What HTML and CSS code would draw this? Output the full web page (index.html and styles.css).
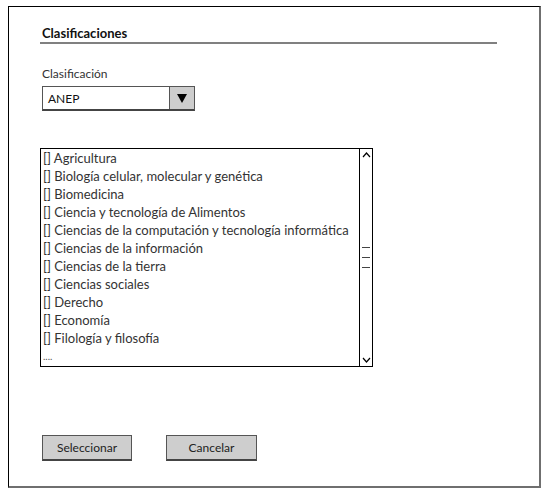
FILE: index.html
```html
<!DOCTYPE html>
<html lang="es">
<head>
<meta charset="utf-8">
<title>Clasificaciones</title>
<link rel="stylesheet" href="styles.css">
</head>
<body>
<div class="frame">
  <div class="title">Clasificaciones</div>
  <div class="label">Clasificación</div>
  <div class="select">
    <div class="select-value">ANEP</div>
    <div class="select-btn">
      <svg width="10" height="9" viewBox="0 0 10 9"><polygon points="0,0 10,0 5,9" fill="#000"/></svg>
    </div>
  </div>
  <div class="list">
    <div class="items">
      <div class="item">[] Agricultura</div>
      <div class="item">[] Biología celular, molecular y genética</div>
      <div class="item">[] Biomedicina</div>
      <div class="item">[] Ciencia y tecnología de Alimentos</div>
      <div class="item">[] Ciencias de la computación y tecnología informática</div>
      <div class="item">[] Ciencias de la información</div>
      <div class="item">[] Ciencias de la tierra</div>
      <div class="item">[] Ciencias sociales</div>
      <div class="item">[] Derecho</div>
      <div class="item">[] Economía</div>
      <div class="item">[] Filología y filosofía</div>
      <div class="item dots">....</div>
    </div>
    <div class="scrollbar">
      <svg class="arrow" width="9" height="6" viewBox="0 0 9 6"><polyline points="1,5 4.5,1 8,5" fill="none" stroke="#000" stroke-width="1.2"/></svg>
      <div class="thumb">
        <span></span><span></span><span></span>
      </div>
      <svg class="arrow" width="9" height="6" viewBox="0 0 9 6"><polyline points="1,1 4.5,5 8,1" fill="none" stroke="#000" stroke-width="1.2"/></svg>
    </div>
  </div>
  <div class="buttons">
    <div class="btn btn-select">Seleccionar</div>
    <div class="btn btn-cancel">Cancelar</div>
  </div>
</div>
</body>
</html>
```

FILE: styles.css
```css
html, body {
  margin: 0;
  padding: 0;
  background: #fff;
}

body {
  font-family: Lato, "Open Sans", sans-serif;
  color: #222;
}

.frame {
  margin: 6px 0 0 8px;
  width: 533px;
  height: 482px;
  border-top: 1px solid #000;
  border-left: 1px solid #000;
  border-right: 2px solid #6f6f6f;
  border-bottom: 2px solid #6f6f6f;
  padding: 18px 0 0 31px;
  box-sizing: border-box;
  display: flex;
  flex-direction: column;
  align-items: flex-start;
}

.title {
  width: 457px;
  box-sizing: border-box;
  padding-left: 2px;
  font-size: 13px;
  font-weight: bold;
  line-height: 17px;
  color: #111;
  border-bottom: 2px solid #808080;
}

.label {
  margin-top: 22px;
  padding-left: 2px;
  font-size: 12px;
  line-height: 15px;
  color: #333;
}

.select {
  margin-top: 5px;
  margin-left: 2px;
  width: 153px;
  height: 25px;
  box-sizing: border-box;
  border: 1px solid #555;
  border-bottom: 2px solid #444;
  display: flex;
}

.select-value {
  flex: 1;
  padding-left: 5px;
  font-size: 12px;
  line-height: 23px;
  color: #111;
}

.select-btn {
  width: 24px;
  background: #cdcdcd;
  border-left: 1px solid #555;
  display: flex;
  align-items: center;
  justify-content: center;
}

.list {
  margin-top: 37px;
  width: 333px;
  height: 219px;
  box-sizing: border-box;
  border: 1px solid #000;
  display: flex;
}

.items {
  flex: 1;
  padding-left: 2px;
}

.item {
  height: 18px;
  font-size: 13px;
  line-height: 18px;
  color: #333;
  white-space: nowrap;
}

.item.dots {
  font-size: 10px;
  color: #555;
}

.scrollbar {
  width: 13px;
  border-left: 1px solid #000;
  display: flex;
  flex-direction: column;
  align-items: center;
  justify-content: space-between;
  padding: 3px 0 3px;
  box-sizing: border-box;
}

.thumb {
  display: flex;
  flex-direction: column;
  gap: 9px;
}

.thumb span {
  display: block;
  width: 8px;
  height: 1px;
  background: #444;
}

.buttons {
  margin-top: 68px;
  margin-left: 2px;
  display: flex;
  gap: 34px;
}

.btn {
  height: 26px;
  box-sizing: border-box;
  border: 1px solid #555;
  border-bottom: 2px solid #444;
  background: #cecece;
  font-size: 12px;
  line-height: 23px;
  text-align: center;
  color: #222;
}

.btn-select {
  width: 90px;
}

.btn-cancel {
  width: 91px;
}
```
